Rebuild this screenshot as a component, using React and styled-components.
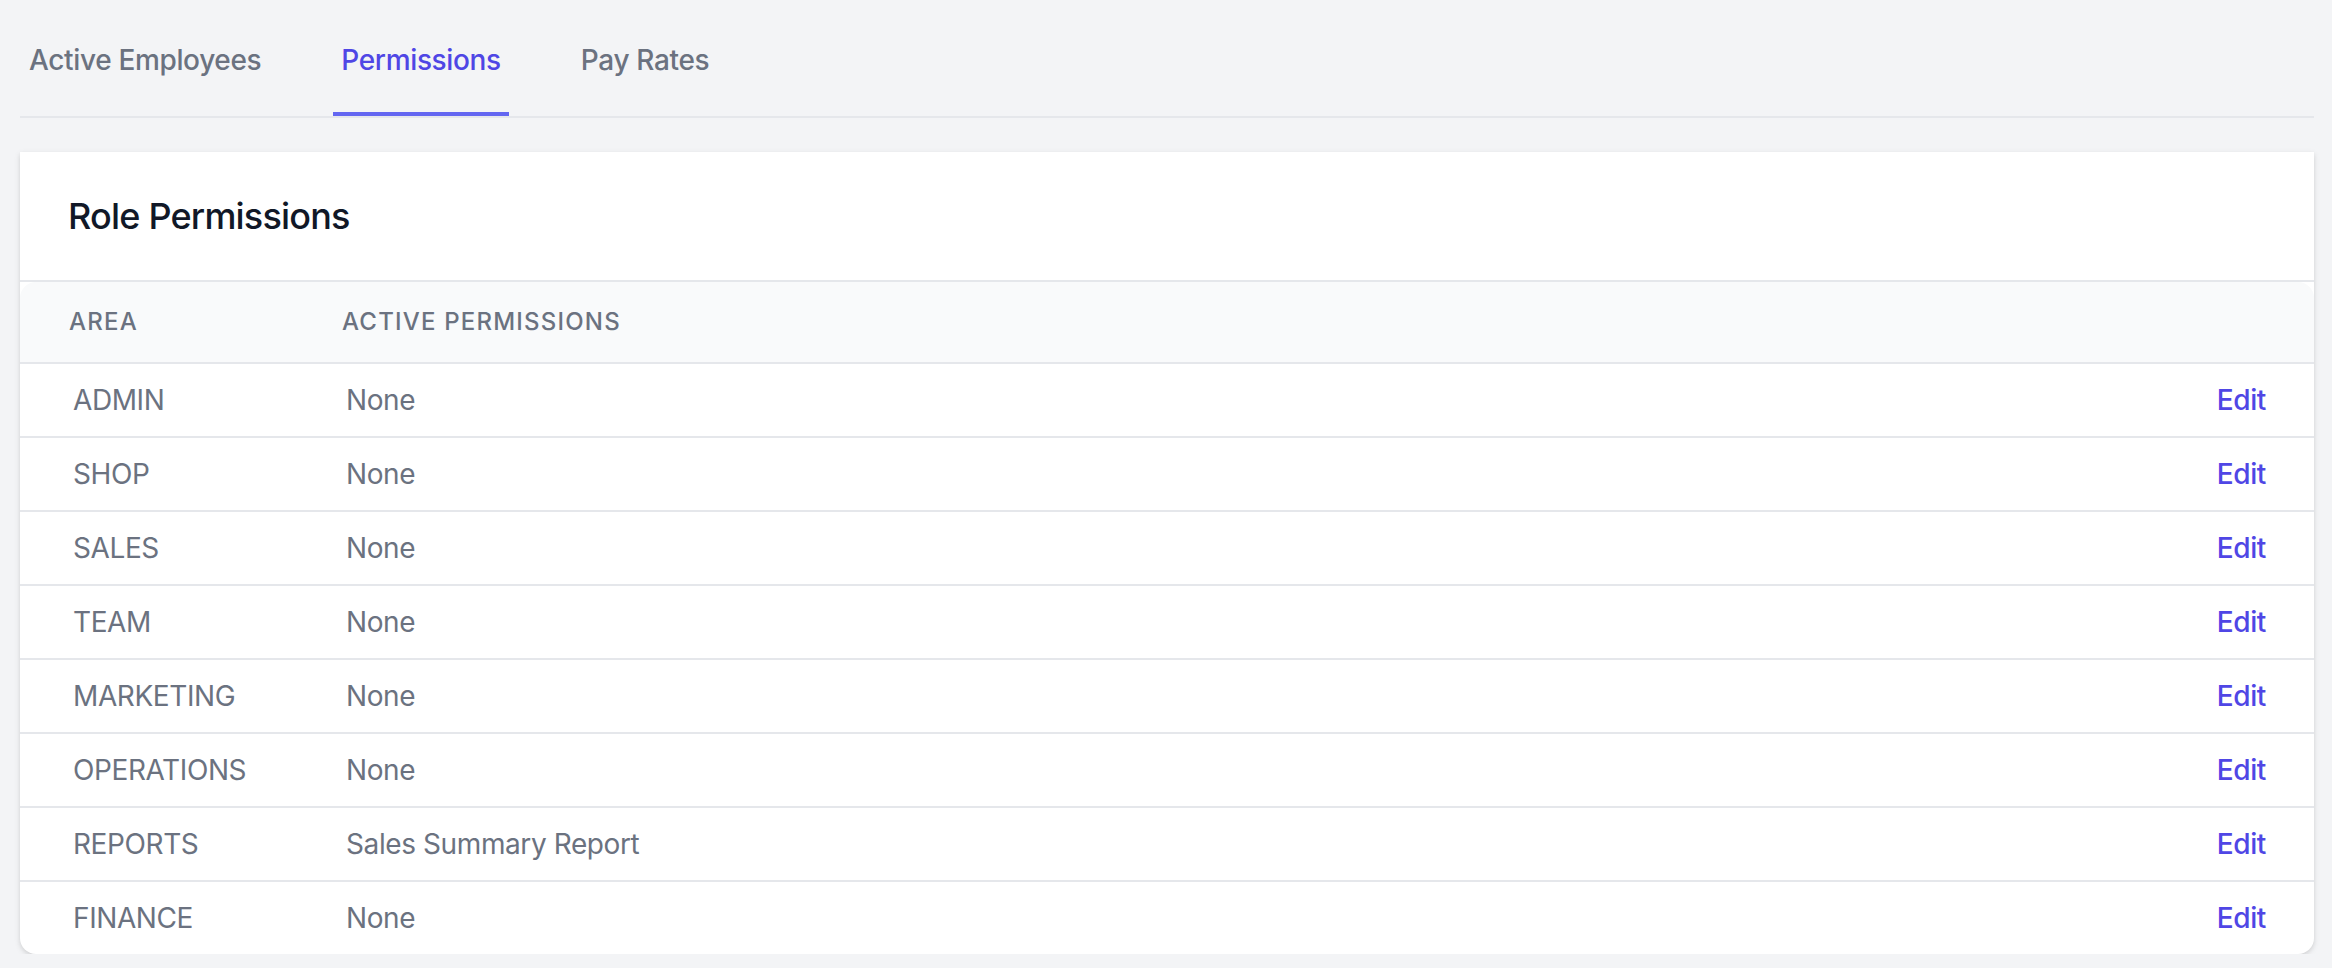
import React from "react";
import styled, { createGlobalStyle } from "styled-components";

const GlobalStyle = createGlobalStyle`
  * {
    box-sizing: border-box;
  }
  body {
    margin: 0;
    background: #f3f4f6;
    font-family: Inter, "Noto Sans", "Liberation Sans", sans-serif;
    -webkit-font-smoothing: antialiased;
  }
`;

const tabs = ["Active Employees", "Permissions", "Pay Rates"];

const areas = [
  { name: "ADMIN", perms: "None" },
  { name: "SHOP", perms: "None" },
  { name: "SALES", perms: "None" },
  { name: "TEAM", perms: "None" },
  { name: "MARKETING", perms: "None" },
  { name: "OPERATIONS", perms: "None" },
  { name: "REPORTS", perms: "Sales Summary Report" },
  { name: "FINANCE", perms: "None" },
];

const App = () => {
  return (
    <Page>
      <GlobalStyle />
      <TabNav>
        {tabs.map((t) => (
          <Tab key={t} active={t === "Permissions"}>
            {t}
          </Tab>
        ))}
      </TabNav>

      <Card>
        <CardHeader>
          <Title>Role Permissions</Title>
        </CardHeader>
        <HeadRow>
          <span>Area</span>
          <span>Active Permissions</span>
          <span />
        </HeadRow>
        {areas.map((a) => (
          <Row key={a.name}>
            <span>{a.name}</span>
            <span>{a.perms}</span>
            <EditLink href="#">Edit</EditLink>
          </Row>
        ))}
      </Card>
    </Page>
  );
};

const Page = styled.div`
  padding: 8px 18px 0 20px;
`;

const TabNav = styled.nav`
  display: flex;
  gap: 64px;
  padding-left: 1px;
  border-bottom: 2px solid #e5e7eb;
`;

const Tab = styled.a`
  padding: 32px 8px;
  font-size: 28px;
  line-height: 40px;
  font-weight: 500;
  letter-spacing: -0.35px;
  cursor: pointer;
  color: ${({ active }) => (active ? "#4f46e5" : "#6b7280")};
  border-bottom: 4px solid ${({ active }) => (active ? "#6366f1" : "transparent")};
`;

const Card = styled.section`
  margin-top: 34px;
  background: #fff;
  border-radius: 0 0 16px 16px;
  box-shadow: 0 2px 6px rgba(0, 0, 0, 0.1), 0 2px 4px rgba(0, 0, 0, 0.06);
`;

const CardHeader = styled.div`
  padding: 40px 48px;
  border-bottom: 2px solid #e5e7eb;
`;

const Title = styled.h3`
  margin: 0;
  font-size: 36px;
  line-height: 48px;
  font-weight: 500;
  letter-spacing: -0.8px;
  color: #111827;
`;

const HeadRow = styled.div`
  display: grid;
  grid-template-columns: 273px 1fr auto;
  padding: 24px 48px 24px 49px;
  background: #f9fafb;
  border-radius: 16px 16px 0 0;
  border-bottom: 2px solid #e5e7eb;
  font-size: 24px;
  line-height: 32px;
  font-weight: 500;
  letter-spacing: 0.05em;
  text-transform: uppercase;
  color: #6b7280;
`;

const Row = styled.div`
  display: grid;
  grid-template-columns: 273px 1fr auto;
  padding: 16px 48px 16px 53px;
  font-size: 28px;
  line-height: 40px;
  letter-spacing: -0.4px;
  color: #6b7280;

  & + & {
    border-top: 2px solid #e5e7eb;
  }
`;

const EditLink = styled.a`
  color: #4f46e5;
  font-weight: 500;
  text-decoration: none;
`;

export default App;
